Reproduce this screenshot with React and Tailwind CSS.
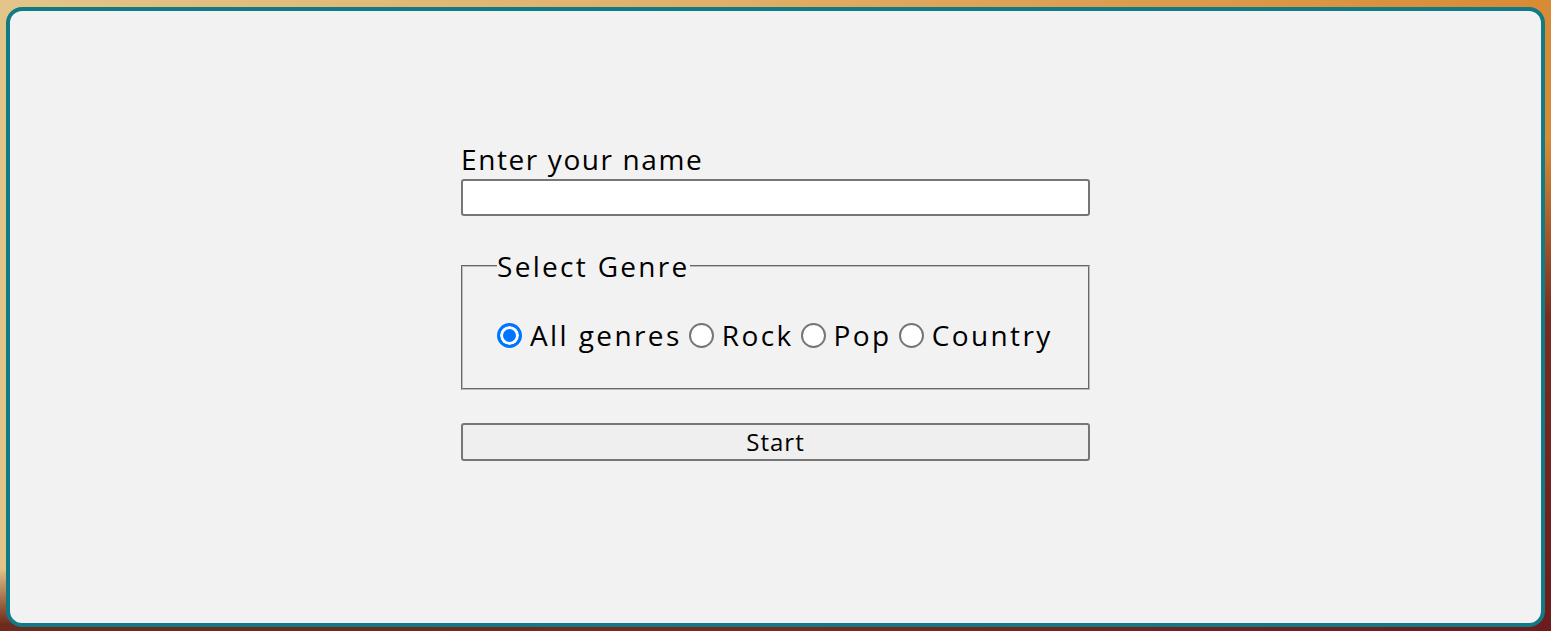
import { useState } from "react";

const genres = ["All genres", "Rock", "Pop", "Country"];

export default function App() {
  const [name, setName] = useState("");
  const [genre, setGenre] = useState("All genres");

  return (
    <div className="h-[631px] w-full overflow-hidden bg-[radial-gradient(ellipse_at_100%_100%,#6b1c1c_0%,#7a2a1e_35%,transparent_55%),linear-gradient(180deg,transparent_90%,#6e2a1c_99%),linear-gradient(90deg,#e3c589_0%,#e0b06a_45%,#d98a34_100%)] pt-[7px] pl-[6px] pr-[6px] font-['Open_Sans',sans-serif] text-black">
      <div className="h-[620px] w-[1539px] rounded-[16px] border-4 border-[#107a86] bg-[#f2f2f2] flex justify-center pt-[129px]">
        <form className="w-[629px] flex flex-col" onSubmit={(e) => e.preventDefault()}>
          <label htmlFor="name" className="text-[28px] leading-[39px] tracking-[1.6px]">
            Enter your name
          </label>
          <input
            id="name"
            type="text"
            value={name}
            onChange={(e) => setName(e.target.value)}
            className="h-[37px] w-full rounded-[3px] border-2 border-[#767676] bg-white px-2 text-[20px] outline-none"
          />

          <fieldset className="mt-[31px] h-[143px] border-2 border-[#bcbcbc] [border-style:groove] pl-[34px] pr-[21px]">
            <legend className="text-[28px] leading-[38px] px-0 tracking-[2.3px]">Select Genre</legend>
            <div className="flex items-center mt-[31px] text-[28px] leading-[38px] tracking-[2.4px]">
              {genres.map((g, i) => (
                <label key={g} className={`flex items-center ${i > 0 ? "ml-[7px]" : ""}`}>
                  <input
                    type="radio"
                    name="genre"
                    checked={genre === g}
                    onChange={() => setGenre(g)}
                    className="m-0 h-[25px] w-[25px] shrink-0 appearance-none rounded-full border-2 border-[#767676] bg-white checked:border-[3px] checked:border-[#0075ff] checked:bg-[#0075ff] checked:shadow-[inset_0_0_0_3px_white]"
                  />
                  <span className="ml-[8px]">{g}</span>
                </label>
              ))}
            </div>
          </fieldset>

          <button
            type="submit"
            className="mt-[33px] h-[38px] w-full rounded-[3px] border-2 border-[#767676] bg-[#efefef] text-[24px] leading-none tracking-[1px]"
          >
            Start
          </button>
        </form>
      </div>
    </div>
  );
}
